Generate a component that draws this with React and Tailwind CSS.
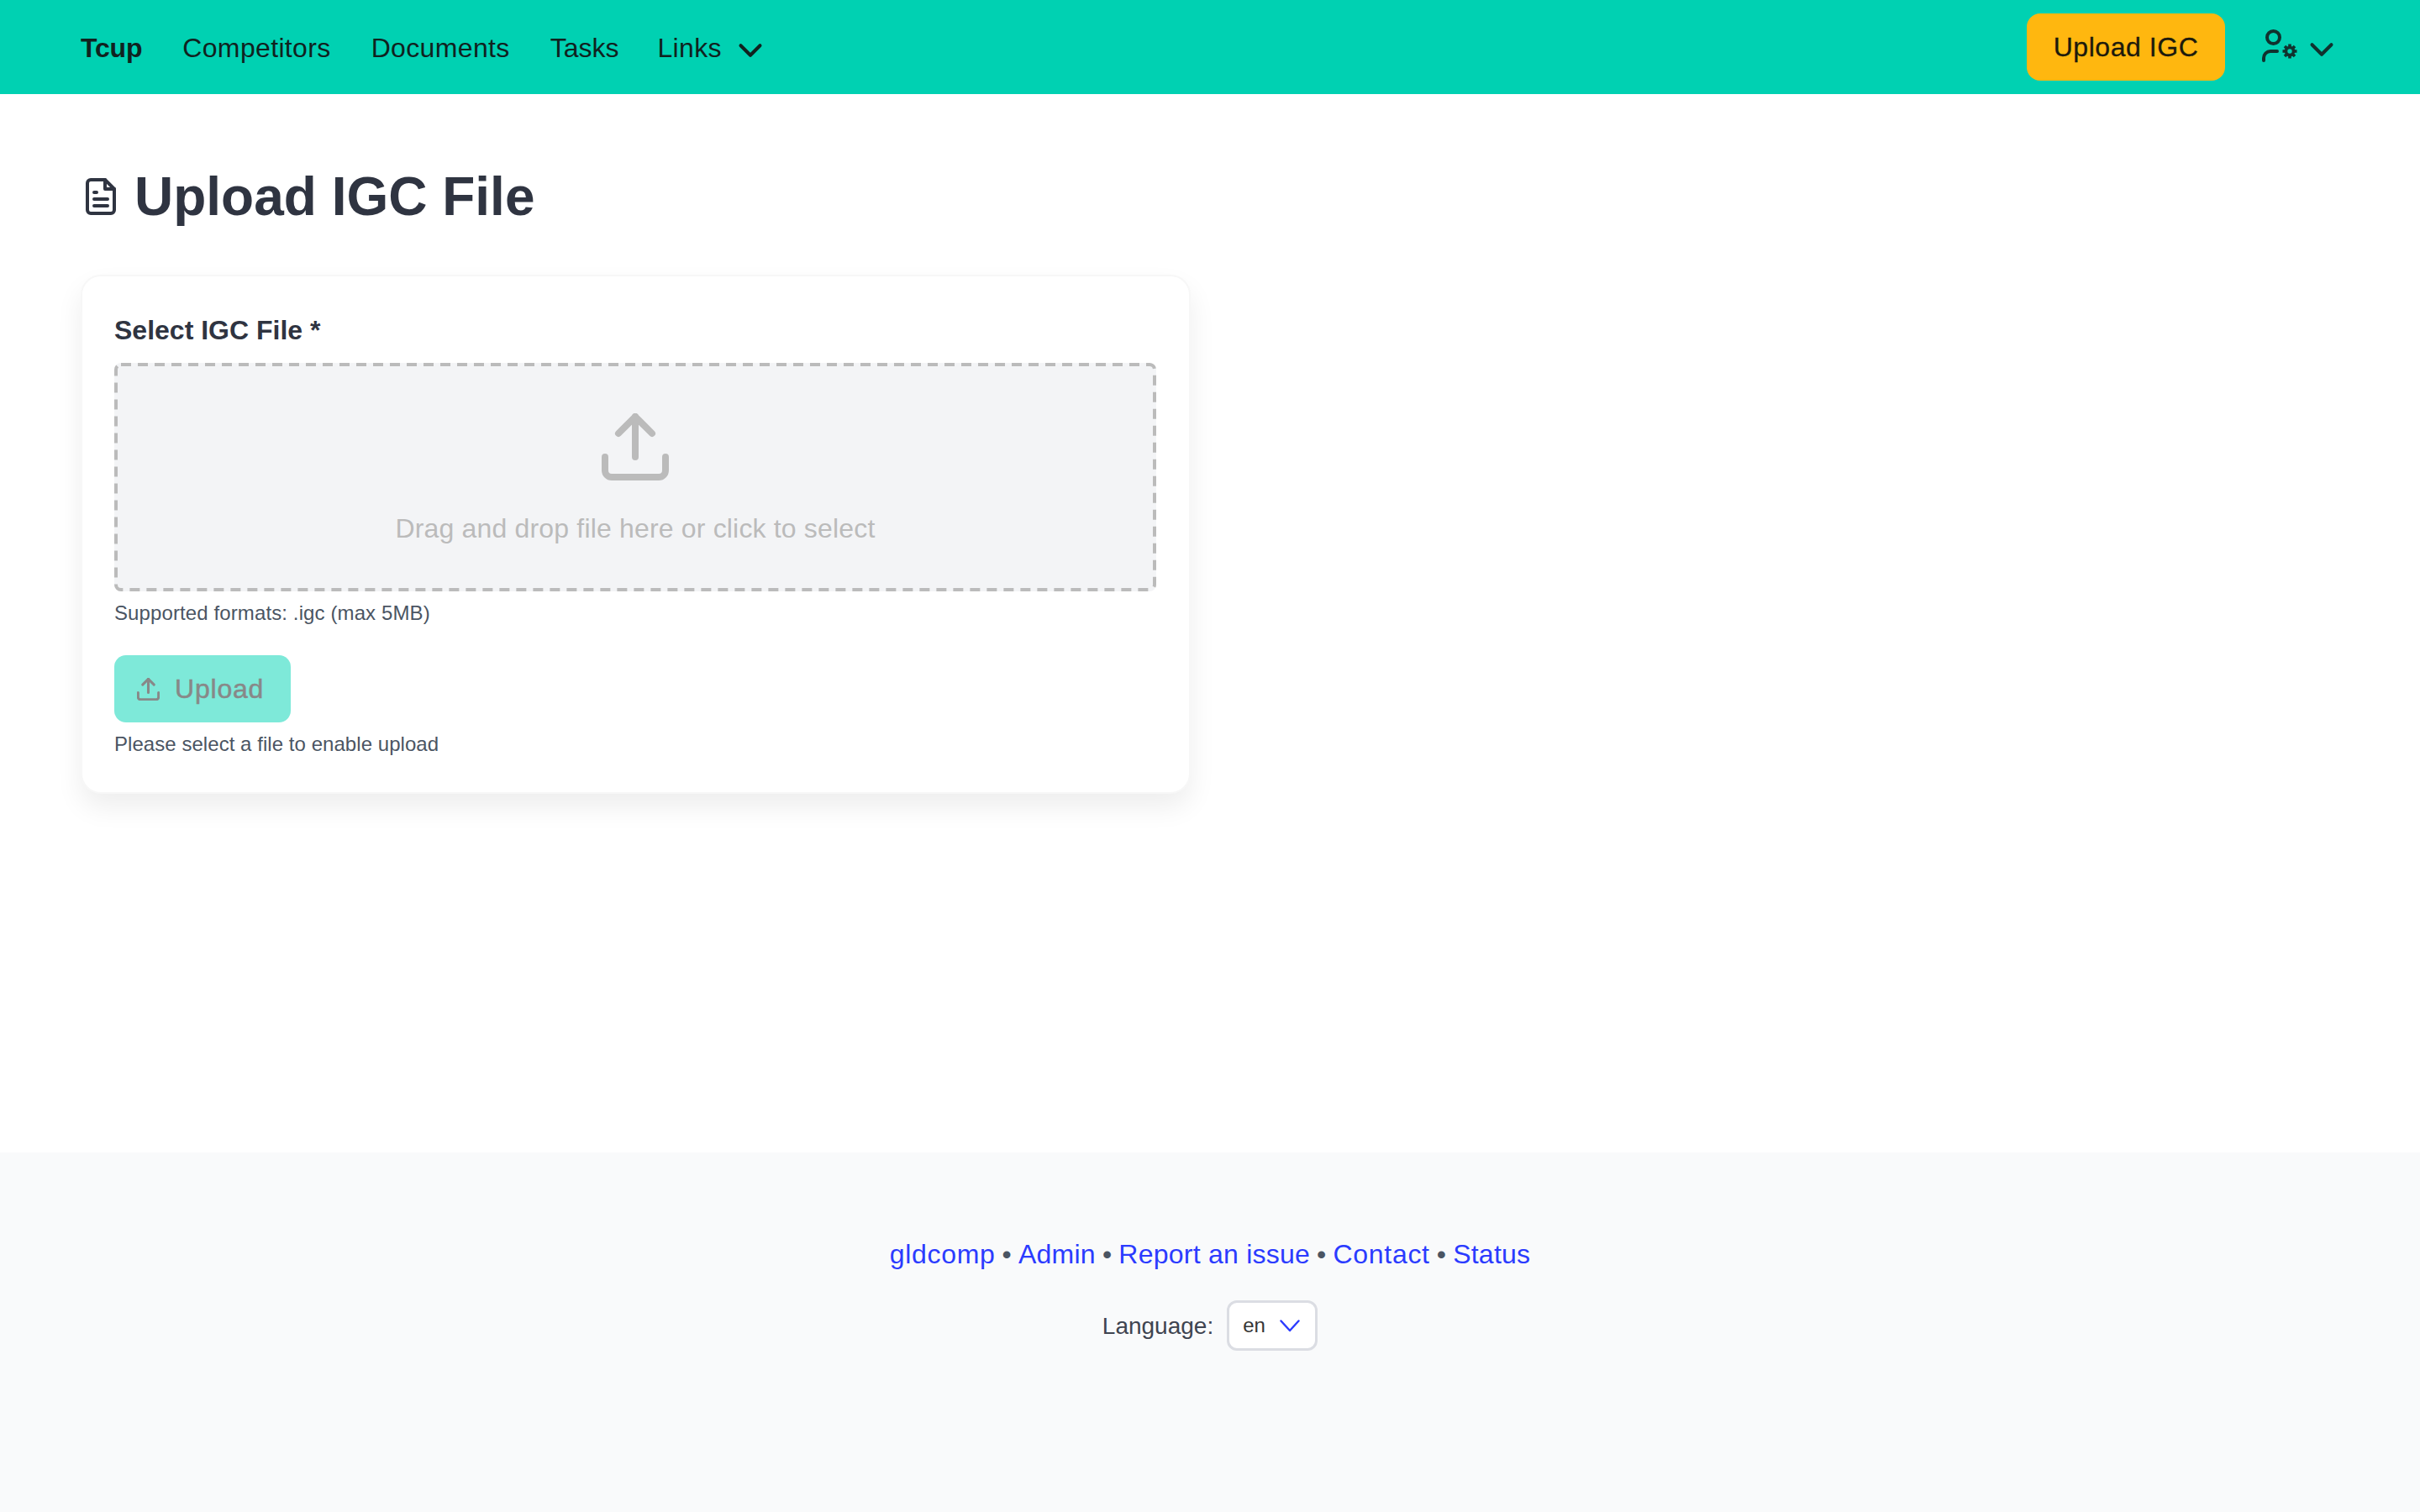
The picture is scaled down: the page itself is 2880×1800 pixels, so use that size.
import React from 'react';
import { ChevronDown } from 'lucide-react';

const sans = { fontFamily: '"Liberation Sans", Arial, sans-serif' };

const DocIcon = () => (
  <svg viewBox="0 0 36 44" className="w-[36px] h-[44px]" fill="none" stroke="#2f3441" strokeWidth="4" strokeLinecap="round" strokeLinejoin="round">
    <path d="M6 2h17l11 11v25a4 4 0 0 1-4 4H6a4 4 0 0 1-4-4V6a4 4 0 0 1 4-4z" />
    <path d="M23 2v11h11" />
    <path d="M10 17h3M10 25h16M10 33h16" />
  </svg>
);

const UserCogIcon = () => (
  <svg viewBox="0 0 46 42" className="w-[46px] h-[42px]" fill="none" stroke="#10322e" strokeWidth="4" strokeLinecap="round" strokeLinejoin="round">
    <circle cx="15.5" cy="9.5" r="7.5" />
    <path d="M4 37v-3a8 8 0 0 1 8-8h8" />
    <circle cx="35" cy="26" r="4.5" strokeWidth="3.6" />
    <g strokeWidth="3.6" strokeLinecap="butt">
      <path d="M35 17.5v3M35 31.5v3M26.5 26h3M40.5 26h3" />
      <path d="M29 20l2 2M39 30l2 2M29 32l2-2M39 22l2-2" />
    </g>
  </svg>
);

const UploadIcon = ({ className, color, width }) => (
  <svg viewBox="0 0 80 80" className={className} fill="none" stroke={color} strokeWidth={width} strokeLinecap="round" strokeLinejoin="round">
    <path d="M40 4v48" />
    <path d="M20 24L40 4l20 20" />
    <path d="M4 52v16a8 8 0 0 0 8 8h56a8 8 0 0 0 8-8V52" />
  </svg>
);

const NavLink = ({ children, className = 'tracking-[0.35px]' }) => (
  <a className={`text-[32px] leading-[48px] text-[#10221f] ${className}`}>{children}</a>
);

const Dot = () => <span className="text-[#4b5563] mx-[8px]">•</span>;

export default function App() {
  return (
    <div className="min-h-screen flex flex-col bg-white" style={sans}>
      {/* Navbar */}
      <nav className="h-[112px] bg-[#00d1b2] flex items-center justify-between pl-[96px] pr-[94px]">
        <div className="flex items-center gap-[48px] pt-[1px]">
          <NavLink className="font-bold tracking-[-0.2px]">Tcup</NavLink>
          <NavLink>Competitors</NavLink>
          <NavLink>Documents</NavLink>
          <NavLink className="tracking-normal">Tasks</NavLink>
          <div className="flex items-center gap-[11px] -ml-[2px]">
            <NavLink>Links</NavLink>
            <ChevronDown className="w-[46px] h-[46px] mt-[6px] text-[#10221f]" strokeWidth={2.1} />
          </div>
        </div>
        <div className="flex items-center">
          <button className="h-[80px] w-[236px] rounded-[16px] bg-[#ffb70f] text-[32px] tracking-[0.55px] text-[#1c1a0c] [-webkit-text-stroke:0.3px_#1c1a0c]">Upload IGC</button>
          <div className="ml-[42px] flex items-center gap-[4px]">
            <UserCogIcon />
            <ChevronDown className="w-[46px] h-[46px] mt-[6px] text-[#10322e]" strokeWidth={2.1} />
          </div>
        </div>
      </nav>

      {/* Main */}
      <main className="flex-1 pl-[96px] pt-[94px]">
        <div className="flex items-center gap-[22px] h-[56px] pl-[6px]">
          <DocIcon />
          <h1 className="text-[64px] leading-[56px] font-bold text-[#2f3441]">Upload IGC File</h1>
        </div>

        <div className="mt-[65px] w-[1321px] h-[618px] rounded-[24px] bg-white border-2 border-[#f7f7f7] shadow-[0_16px_32px_rgba(0,0,0,0.07)] pl-[38px] pr-[39px] pt-[44px]">
          <label className="block text-[32px] leading-[40px] font-bold text-[#2f3441]">Select IGC File *</label>
          <div className="relative mt-[19px] h-[272px] rounded-[8px] bg-[#f3f4f6] flex flex-col items-center pt-[60px]">
            <svg viewBox="0 0 1240 272" className="absolute inset-0 w-full h-full" fill="none">
              <rect x="2" y="2" width="1236" height="268" rx="6" stroke="#bbbbbb" strokeWidth="4" strokeDasharray="12 8" />
            </svg>
            <UploadIcon className="w-[80px] h-[80px]" color="#bbbbbb" width="8" />
            <p className="mt-[35px] text-[32px] leading-[44px] tracking-[0.17px] text-[#bbbbbb]">Drag and drop file here or click to select</p>
          </div>
          <p className="mt-[12px] text-[24px] leading-[28px] tracking-[0.11px] text-[#4b5563]">Supported formats: .igc (max 5MB)</p>
          <button className="mt-[36px] h-[80px] w-[210px] rounded-[14px] bg-[#7ee9d9] flex items-center pl-[27px] text-[#888888] text-[32px] tracking-[0.8px] [-webkit-text-stroke:0.5px_#888888]">
            <UploadIcon className="w-[27px] h-[27px]" color="#888888" width="9" />
            <span className="ml-[18px]">Upload</span>
          </button>
          <p className="mt-[12px] text-[24px] leading-[28px] tracking-[0.05px] text-[#4b5563]">Please select a file to enable upload</p>
        </div>
      </main>

      {/* Footer */}
      <footer className="h-[428px] bg-[#f9fafb] flex flex-col items-center pt-[100px]">
        <p className="text-[32px] leading-[42px] tracking-[0.24px] text-[#2b3bff]">
          <a className="tracking-[0.7px]">gldcomp</a><Dot /><a>Admin</a><Dot /><a>Report an issue</a><Dot /><a className="tracking-[0.7px]">Contact</a><Dot /><a>Status</a>
        </p>
        <div className="mt-[35px] flex items-center gap-[16px]">
          <span className="text-[28px] text-[#3f4450]">Language:</span>
          <div className="-mt-[1px] h-[60px] w-[108px] rounded-[12px] bg-white border-[3px] border-[#dbdde3] flex items-center justify-between pl-[16px] pr-[18px]">
            <span className="text-[24px] text-[#363636]">en</span>
            <svg viewBox="0 0 24 15" className="w-[24px] h-[15px]" fill="none" stroke="#2b3bff" strokeWidth="2.4" strokeLinecap="round" strokeLinejoin="round">
              <path d="M1.5 1.5L12 13L22.5 1.5" />
            </svg>
          </div>
        </div>
      </footer>
    </div>
  );
}
